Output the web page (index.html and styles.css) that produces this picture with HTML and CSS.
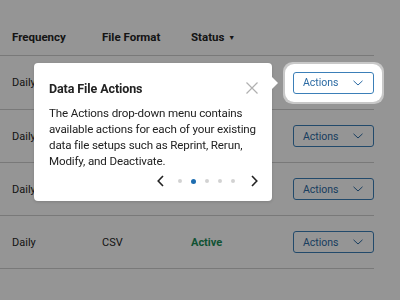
FILE: index.html
```html
<!DOCTYPE html>
<html>
<head>
<meta charset="utf-8">
<link rel="stylesheet" href="styles.css">
</head>
<body>
<div class="table">
  <div class="row head">
    <div class="cell">Frequency</div>
    <div class="cell">File Format</div>
    <div class="cell">Status <span class="caret">&#9660;</span></div>
    <div class="cell"></div>
  </div>
  <div class="row first">
    <div class="cell">Daily</div>
    <div class="cell">CSV</div>
    <div class="cell active">Active</div>
    <div class="cell"><button class="btn focus">Actions<svg width="10" height="6" viewBox="0 0 10 6"><path d="M0.5 0.8 L5 5 L9.5 0.8" fill="none" stroke="currentColor" stroke-width="1"/></svg></button></div>
  </div>
  <div class="row">
    <div class="cell">Daily</div>
    <div class="cell">CSV</div>
    <div class="cell active">Active</div>
    <div class="cell"><button class="btn">Actions<svg width="10" height="6" viewBox="0 0 10 6"><path d="M0.5 0.8 L5 5 L9.5 0.8" fill="none" stroke="currentColor" stroke-width="1"/></svg></button></div>
  </div>
  <div class="row">
    <div class="cell">Daily</div>
    <div class="cell">CSV</div>
    <div class="cell active">Active</div>
    <div class="cell"><button class="btn">Actions<svg width="10" height="6" viewBox="0 0 10 6"><path d="M0.5 0.8 L5 5 L9.5 0.8" fill="none" stroke="currentColor" stroke-width="1"/></svg></button></div>
  </div>
  <div class="row">
    <div class="cell">Daily</div>
    <div class="cell">CSV</div>
    <div class="cell active">Active</div>
    <div class="cell"><button class="btn">Actions<svg width="10" height="6" viewBox="0 0 10 6"><path d="M0.5 0.8 L5 5 L9.5 0.8" fill="none" stroke="currentColor" stroke-width="1"/></svg></button></div>
  </div>
</div>
<div class="overlay"></div>
<div class="tip">
  <div class="tip-head">
    <div class="tip-title">Data File Actions</div>
    <svg class="close" width="12" height="12" viewBox="0 0 12 12"><path d="M0.5 0.5 L11.5 11.5 M11.5 0.5 L0.5 11.5" stroke="#b0b0b0" stroke-width="1.2" fill="none"/></svg>
  </div>
  <p class="tip-body">The Actions drop-down menu contains available actions for each of your existing data file setups such as Reprint, Rerun, Modify, and Deactivate.</p>
  <div class="pager">
    <svg width="7" height="12" viewBox="0 0 7 12"><path d="M6 1 L1.2 6 L6 11" fill="none" stroke="#222" stroke-width="1.6"/></svg>
    <div class="dots">
      <span class="dot"></span><span class="dot on"></span><span class="dot"></span><span class="dot"></span><span class="dot"></span>
    </div>
    <svg width="7" height="12" viewBox="0 0 7 12"><path d="M1 1 L5.8 6 L1 11" fill="none" stroke="#222" stroke-width="1.6"/></svg>
  </div>
</div>
</body>
</html>
```
FILE: styles.css
```css
html, body {
  margin: 0;
  padding: 0;
  background: #fff;
  width: 400px;
  height: 300px;
  overflow: hidden;
  font-family: Roboto, "Liberation Sans", sans-serif;
  color: #252525;
}
.table {
  width: 374px;
}
.row {
  display: grid;
  grid-template-columns: 90px 89px 102px 81px;
  padding-left: 12px;
  align-items: center;
  height: 52px;
  border-bottom: 1px solid #cfcfcf;
  font-size: 11px;
}
.row.head {
  height: 55px;
  align-items: end;
  font-weight: 700;
  font-size: 11.5px;
}
.row.head .cell {
  padding-bottom: 11px;
}
.row.first {
  height: 53px;
}
.caret {
  font-size: 7px;
  margin-left: 1px;
  vertical-align: 1px;
}
.active {
  color: #1b8d58;
  font-weight: 700;
}
.btn {
  display: flex;
  align-items: center;
  justify-content: space-between;
  width: 81px;
  height: 22px;
  padding: 0 10px 0 9px;
  box-sizing: border-box;
  border: 1px solid #3b7fb8;
  border-radius: 3px;
  background: #fff;
  color: #2b6aa3;
  font-family: Roboto, "Liberation Sans", sans-serif;
  font-size: 10.5px;
}
.btn.focus {
  position: relative;
  z-index: 20;
  box-shadow: 0 0 0 8px #fff, 0 0 0 10px #c8c8c8;
}
.overlay {
  position: fixed;
  inset: 0;
  background: rgba(0, 0, 0, 0.415);
  z-index: 10;
}
.tip {
  position: absolute;
  left: 34px;
  top: 63px;
  width: 238px;
  height: 138px;
  box-sizing: border-box;
  padding: 16px 14px 0 15px;
  background: #fff;
  border-radius: 4px;
  z-index: 20;
  box-shadow: 0 1px 3px rgba(0,0,0,0.15);
}
.tip::after {
  content: "";
  position: absolute;
  right: -6px;
  top: 14px;
  border-left: 6px solid #fff;
  border-top: 6px solid transparent;
  border-bottom: 6px solid transparent;
}
.tip-head {
  display: flex;
  justify-content: space-between;
  align-items: center;
  height: 18px;
}
.tip-title {
  font-size: 12.5px;
  font-weight: 700;
  letter-spacing: -0.1px;
  color: #222;
}
.tip-body {
  margin: 8px 0 0;
  font-size: 11.6px;
  letter-spacing: -0.15px;
  line-height: 16px;
  color: #222;
}
.pager {
  display: flex;
  justify-content: flex-end;
  align-items: center;
  margin-top: 5px;
  height: 14px;
}
.dots {
  display: flex;
  align-items: center;
  gap: 9px;
  margin: 0 16px 0 14px;
}
.dot {
  width: 4px;
  height: 4px;
  border-radius: 50%;
  background: #d2d2d2;
}
.dot.on {
  width: 5px;
  height: 5px;
  background: #1e6db0;
}
```
